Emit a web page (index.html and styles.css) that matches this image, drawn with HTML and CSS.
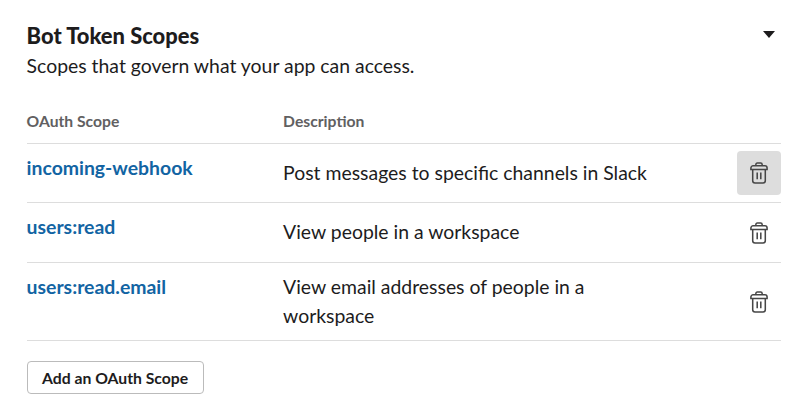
FILE: index.html
```html
<html>
    <head>
        <link rel="stylesheet" href="styles.css">
    </head>
    <body>
        <svg class="icon-defs" width="0" height="0">
            <symbol id="trash" viewBox="0 0 20 24">
                <path d="M6.500 4V2.600C6.500 1.700 7.200 1 8.100 1h3.800c.9 0 1.600.7 1.600 1.600V4" />
                <path d="M1 6.500C1 5.100 2.100 4 3.500 4h13C17.900 4 19 5.100 19 6.500V8H1z" />
                <path d="M3 8v12.500C3 21.900 4.100 23 5.500 23h9c1.400 0 2.500-1.100 2.500-2.500V8" />
                <path d="M8 11.500v7.500M12 11.500v7.500" />
            </symbol>
        </svg>
        <div class="content-wrapper">
            <div class="section-head">
                <div>
                    <h3>Bot Token Scopes</h3>
                    <p>Scopes that govern what your app can access.</p>
                </div>
                <span class="caret"></span>
            </div>

            <div class="scope-row header-row">
                <div class="scope-name">OAuth Scope</div>
                <div class="scope-desc">Description</div>
            </div>
            <div class="scope-row first-row">
                <a class="scope-name">incoming-webhook</a>
                <div class="scope-desc">Post messages to specific channels in Slack</div>
                <div class="delete-btn active"><svg><use href="#trash"/></svg></div>
            </div>
            <div class="scope-row second-row">
                <a class="scope-name">users:read</a>
                <div class="scope-desc">View people in a workspace</div>
                <div class="delete-btn"><svg><use href="#trash"/></svg></div>
            </div>
            <div class="scope-row third-row">
                <a class="scope-name">users:read.email</a>
                <div class="scope-desc">View email addresses of people in a workspace</div>
                <div class="delete-btn"><svg><use href="#trash"/></svg></div>
            </div>

            <input class="add-btn" type="button" value="Add an OAuth Scope">
        </div>
    </body>
</html>
```

FILE: styles.css
```css
html, body {
    margin: 0;
    padding: 0;
    height: 415px;
    overflow: hidden;
}

body {
    background-color: white;
    color: rgb(29,28,29);
    font-family: Lato, sans-serif;
}

.icon-defs {
    position: absolute;
}

.content-wrapper {
    display: flex;
    flex-direction: column;
    padding: 22px 19px 0 26.600px;
}

.section-head {
    display: flex;
    justify-content: space-between;
    height: 76px;
}

.section-head h3 {
    margin: 0;
    font-size: 21.900px;
    line-height: 28px;
    font-weight: 900;
}

.section-head p {
    margin: 1px 0 0;
    font-size: 19.400px;
    line-height: 29px;
}

.caret {
    width: 0;
    height: 0;
    margin: 9px 6px 0 0;
    border-left: 6px solid transparent;
    border-right: 6px solid transparent;
    border-top: 7px solid rgb(29,28,29);
}

.scope-row {
    display: flex;
    border-bottom: 1px solid rgb(221,221,221);
    box-sizing: border-box;
}

.header-row {
    height: 46px;
    padding-top: 13px;
    color: rgb(97,96,97);
    font-size: 15.700px;
    line-height: 20px;
    font-weight: 700;
}

.first-row {
    height: 59px;
}

.second-row {
    height: 60px;
}

.third-row {
    height: 78px;
}

.scope-name {
    flex: 0 0 256.500px;
}

a.scope-name {
    margin-top: 11px;
    color: rgb(18,100,163);
    font-size: 19.400px;
    line-height: 26px;
    font-weight: 700;
}

.scope-row .scope-desc {
    flex: 0 0 380px;
}

.first-row .scope-desc, .second-row .scope-desc {
    margin-top: 14px;
    font-size: 19.400px;
    line-height: 29px;
}

.third-row .scope-desc {
    margin-top: 9px;
    font-size: 19.400px;
    line-height: 29px;
}

.delete-btn {
    display: flex;
    justify-content: center;
    align-items: center;
    align-self: center;
    width: 44px;
    height: 44px;
    margin-left: auto;
    border-radius: 4px;
}

.delete-btn.active {
    background-color: rgb(221,221,221);
}

.delete-btn svg {
    width: 18px;
    height: 22px;
    fill: none;
    stroke: rgb(70,70,70);
    stroke-width: 1.700;
}

.add-btn {
    align-self: flex-start;
    width: 177px;
    height: 33px;
    margin-top: 20px;
    padding: 0 0 1px;
    color: rgb(29,28,29);
    background-color: white;
    border: 1px solid rgb(187,187,187);
    border-radius: 4px;
    font-family: Lato, sans-serif;
    font-size: 15.750px;
    font-weight: 700;
}
```
